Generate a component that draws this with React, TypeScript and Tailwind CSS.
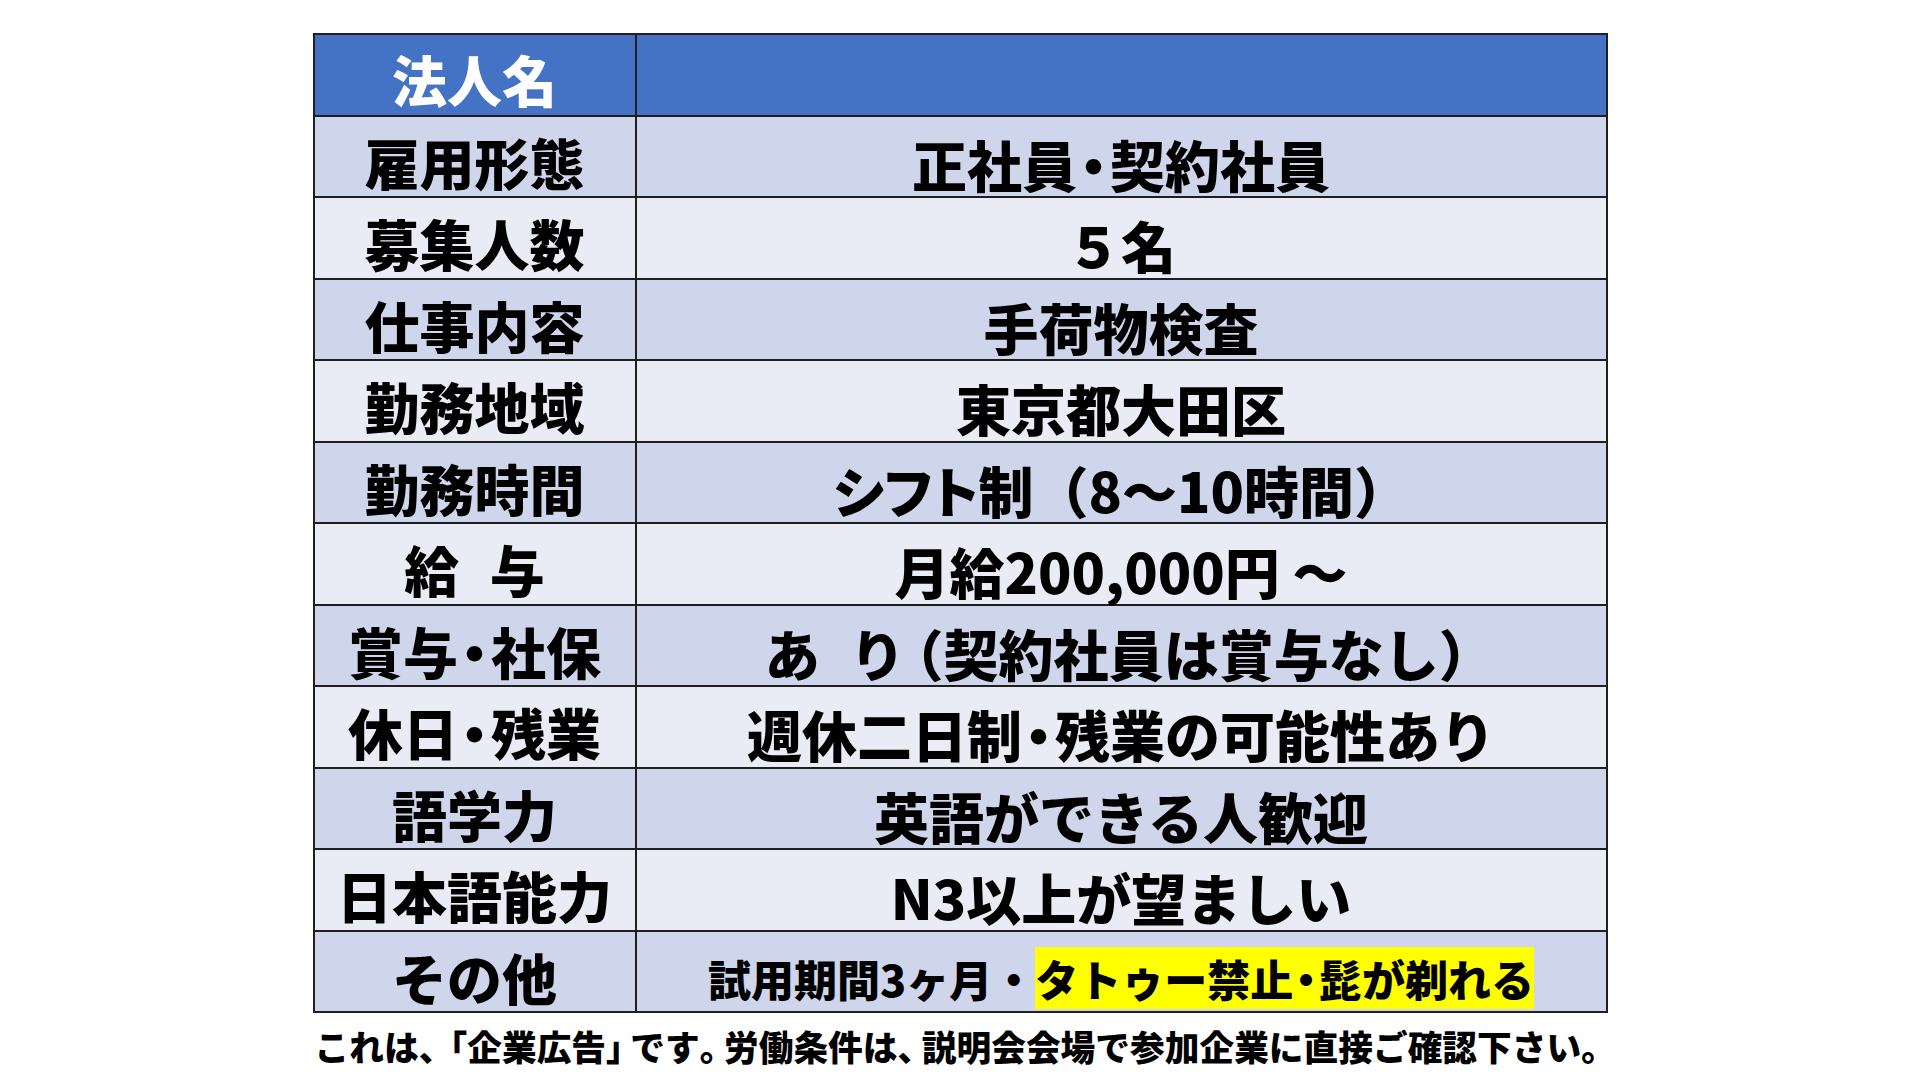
import React from "react";

function fmt(text: string): React.ReactNode[] {
  return Array.from(text).map((ch, i) => {
    switch (ch) {
      case "・":
        return (
          <span key={i} className="[font-feature-settings:'halt'] mx-[0.05em]">
            ・
          </span>
        );
      case "（":
      case "「":
        return (
          <span key={i} className="[font-feature-settings:'halt'] ml-[0.2em]">
            {ch}
          </span>
        );
      case "）":
      case "」":
      case "、":
      case "。":
        return (
          <span key={i} className="[font-feature-settings:'halt'] mr-[0.2em]">
            {ch}
          </span>
        );
      case "　":
        return (
          <span key={i} className="inline-block w-[0.55em]">
            {"\u00a0"}
          </span>
        );
      default:
        return <React.Fragment key={i}>{ch}</React.Fragment>;
    }
  });
}

type Row = { label: string; value: React.ReactNode; small?: boolean };

const rows: Row[] = [
  { label: "雇用形態", value: fmt("正社員・契約社員") },
  { label: "募集人数", value: fmt("５名") },
  { label: "仕事内容", value: fmt("手荷物検査") },
  { label: "勤務地域", value: fmt("東京都大田区") },
  {
    label: "勤務時間",
    value: (
      <>
        <span className="[font-feature-settings:'palt']">シフト</span>制（8～10時間）
      </>
    ),
  },
  { label: "給　与", value: fmt("月給200,000円 ～") },
  { label: "賞与・社保", value: fmt("あ　り（契約社員は賞与なし）") },
  { label: "休日・残業", value: fmt("週休二日制・残業の可能性あり") },
  { label: "語学力", value: fmt("英語ができる人歓迎") },
  { label: "日本語能力", value: fmt("N3以上が望ましい") },
  {
    label: "その他",
    small: true,
    value: (
      <>
        試用期間3ヶ月・
        <span className="bg-[#ffff00] leading-[1.12]">{fmt("タトゥー禁止・髭が剃れる")}</span>
      </>
    ),
  },
];

export default function App() {
  return (
    <div className="w-[1920px] h-[1080px] bg-white font-['Noto_Sans_CJK_JP',sans-serif] font-black text-black overflow-hidden">
      <div className="w-[1295px] mx-auto pt-[33px]">
        <div className="grid grid-cols-[320px_1fr] auto-rows-[79.5px] gap-[2px] p-[2px] bg-[#1f1f1f]">
          <div className="bg-[#4472c4] text-white flex items-center justify-center pt-[8px] text-[55px] leading-none">
            法人名
          </div>
          <div className="bg-[#4472c4]" />
          {rows.map((r, i) => {
            const bg = i % 2 === 0 ? "bg-[#cfd5ea]" : "bg-[#e9ebf5]";
            return (
              <React.Fragment key={r.label}>
                <div className={`${bg} flex items-center justify-center pt-[10px] text-[55px] leading-none`}>
                  <span>{fmt(r.label)}</span>
                </div>
                <div
                  className={`${bg} flex items-center justify-center pt-[14px] leading-none ${
                    r.small ? "text-[43px]" : "text-[55px]"
                  }`}
                >
                  <span className="whitespace-nowrap">{r.value}</span>
                </div>
              </React.Fragment>
            );
          })}
        </div>
        <div className="text-center text-[34.7px] leading-none mt-[16px] whitespace-nowrap">
          {fmt("これは、「企業広告」です。労働条件は、説明会会場で参加企業に直接ご確認下さい。")}
        </div>
      </div>
    </div>
  );
}
